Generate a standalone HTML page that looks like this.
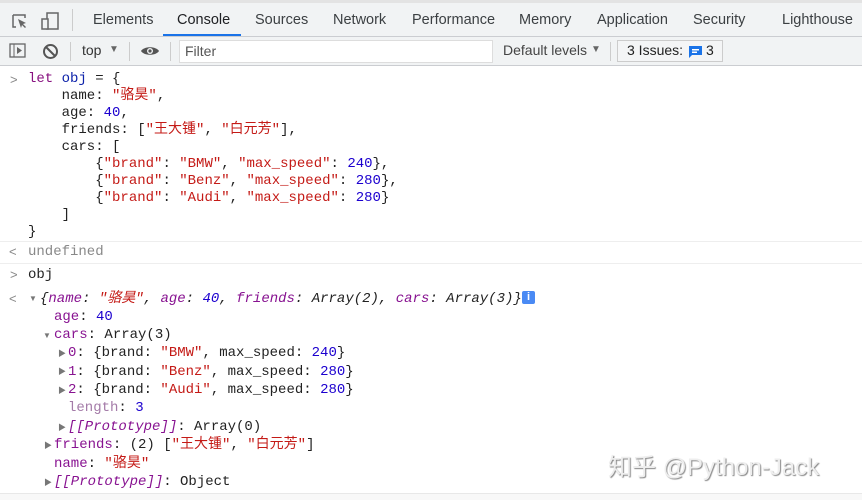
<!DOCTYPE html>
<html><head><meta charset="utf-8"><style>
*{margin:0;padding:0;box-sizing:border-box}
body{width:862px;height:500px;overflow:hidden;background:#fff;font-family:"Liberation Sans","Noto Sans CJK SC",sans-serif;position:relative}
.tb{position:absolute;left:0;top:0;width:862px;height:37px;background:#f1f3f4;border-bottom:1px solid #cbcdd1;border-top:3px solid #e3e3e3}
.tab{position:absolute;top:9px;font-size:14.5px;color:#3c4043}
.tb2{position:absolute;left:0;top:37px;width:862px;height:29px;background:#f1f3f4;border-bottom:1px solid #cbcdd1}
.m{font-family:"Liberation Mono","Noto Sans CJK SC",monospace;font-size:14px;color:#222;position:absolute;line-height:18px;white-space:pre}
.s{color:#c41a16}.n{color:#1c00cf}.p{color:#881391}.k{color:#881280}.v{color:#0d22aa}.g{color:#888}.i{font-style:italic}
.pr{position:absolute;font-size:13px;color:#888;font-family:"Liberation Sans",sans-serif}
.tri{position:absolute;font-size:8px;color:#777;line-height:10px}
</style></head><body>
<div class="tb">
<svg style="position:absolute;left:11px;top:9px" width="18" height="18"><path d="M2 3v12h3M2 3h12v3" fill="none" stroke="#666" stroke-width="1.5"/><path d="M7 7l8 4-3 1 3 3-1 1-3-3-1 3z" fill="#666"/></svg>
<svg style="position:absolute;left:40px;top:8px" width="20" height="20"><rect x="7" y="2" width="11" height="16" fill="none" stroke="#666" stroke-width="1.5"/><rect x="2" y="8" width="6" height="10" fill="#f1f3f4" stroke="#666" stroke-width="1.5"/></svg>
<div style="position:absolute;left:72px;top:6px;width:1px;height:22px;background:#ccc"></div>
<span class="tab" style="left:93px">Elements</span>
<span class="tab" style="left:177px;color:#202124">Console</span>
<div style="position:absolute;left:163px;top:31px;width:78px;height:2px;background:#1a73e8"></div>
<span class="tab" style="left:255px">Sources</span>
<span class="tab" style="left:333px">Network</span>
<span class="tab" style="left:412px">Performance</span>
<span class="tab" style="left:519px">Memory</span>
<span class="tab" style="left:597px">Application</span>
<span class="tab" style="left:693px">Security</span>
<span class="tab" style="left:782px">Lighthouse</span>
</div>
<div class="tb2">
<svg style="position:absolute;left:9px;top:6px" width="18" height="16"><rect x="1" y="1" width="15" height="13" fill="none" stroke="#666" stroke-width="1.3"/><line x1="5" y1="1" x2="5" y2="14" stroke="#666"/><path d="M8 4l5 3.5-5 3.5z" fill="#666"/></svg>
<svg style="position:absolute;left:42px;top:6px" width="17" height="17"><circle cx="8.5" cy="8.5" r="6.5" fill="none" stroke="#555" stroke-width="2"/><line x1="4" y1="4" x2="13" y2="13" stroke="#555" stroke-width="2"/></svg>
<div style="position:absolute;left:70px;top:5px;width:1px;height:19px;background:#ccc"></div>
<span style="position:absolute;left:82px;top:5px;font-size:14px;color:#333">top</span>
<span style="position:absolute;left:109px;top:7px;font-size:10px;color:#666">▼</span>
<div style="position:absolute;left:129px;top:5px;width:1px;height:19px;background:#ccc"></div>
<svg style="position:absolute;left:140px;top:7px" width="20" height="14"><path d="M1 7C4 2 16 2 19 7C16 12 4 12 1 7z" fill="#555"/><circle cx="10" cy="7" r="3" fill="#f1f3f4"/><circle cx="10" cy="7" r="1.6" fill="#555"/></svg>
<div style="position:absolute;left:170px;top:5px;width:1px;height:19px;background:#ccc"></div>
<div style="position:absolute;left:179px;top:3px;width:314px;height:23px;background:#fff;border:1px solid #ddd"></div>
<span style="position:absolute;left:185px;top:6px;font-size:14px;color:#555">Filter</span>
<span style="position:absolute;left:503px;top:5px;font-size:14px;color:#444">Default levels</span>
<span style="position:absolute;left:591px;top:7px;font-size:10px;color:#666">▼</span>
<div style="position:absolute;left:610px;top:5px;width:1px;height:19px;background:#ccc"></div>
<div style="position:absolute;left:617px;top:3px;width:106px;height:22px;border:1px solid #ccc;background:#f4f5f6"></div>
<span style="position:absolute;left:627px;top:5px;font-size:14px;color:#222">3 Issues:</span>
<svg style="position:absolute;left:689px;top:9px" width="13" height="12"><path d="M0 0h13v9H3l-3 3z" fill="#1a73e8"/><rect x="3" y="3" width="7" height="1.5" fill="#fff"/><rect x="3" y="5.5" width="5" height="1.5" fill="#fff"/></svg>
<span style="position:absolute;left:706px;top:5px;font-size:14px;color:#222">3</span>
</div>

<span class="pr" style="left:10px;top:72px">&gt;</span>
<div class="m" style="left:28px;top:71px;line-height:17px"><span class="k">let</span> <span class="v">obj</span> = {
    name: <span class="s">"骆昊"</span>,
    age: <span class="n">40</span>,
    friends: [<span class="s">"王大锺"</span>, <span class="s">"白元芳"</span>],
    cars: [
        {<span class="s">"brand"</span>: <span class="s">"BMW"</span>, <span class="s">"max_speed"</span>: <span class="n">240</span>},
        {<span class="s">"brand"</span>: <span class="s">"Benz"</span>, <span class="s">"max_speed"</span>: <span class="n">280</span>},
        {<span class="s">"brand"</span>: <span class="s">"Audi"</span>, <span class="s">"max_speed"</span>: <span class="n">280</span>}
    ]
}</div>
<div style="position:absolute;left:0;top:241px;width:862px;height:1px;background:#eee"></div>
<span class="pr" style="left:9px;top:244px">&lt;</span>
<div class="m g" style="left:28px;top:243px">undefined</div>
<div style="position:absolute;left:0;top:263px;width:862px;height:1px;background:#eee"></div>
<span class="pr" style="left:10px;top:267px">&gt;</span>
<div class="m" style="left:28px;top:266px">obj</div>
<span class="pr" style="left:9px;top:291px">&lt;</span>
<span class="tri" style="left:29px;top:294px">▼</span>
<div class="m i" style="left:40px;top:290px">{<span class="p">name</span>: <span class="s">"骆昊"</span>, <span class="p">age</span>: <span class="n">40</span>, <span class="p">friends</span>: Array(2), <span class="p">cars</span>: Array(3)}</div>
<div style="position:absolute;left:522px;top:291px;width:13px;height:13px;background:#4a8af4;border-radius:2px;color:#fff;font-size:11px;font-weight:bold;text-align:center;line-height:13px">i</div>
<div class="m" style="left:54px;top:308px"><span class="p">age</span>: <span class="n">40</span></div>
<span class="tri" style="left:43px;top:331px">▼</span>
<div class="m" style="left:54px;top:326px"><span class="p">cars</span>: Array(3)</div>
<span class="tri" style="left:58px;top:349px">▶</span>
<div class="m" style="left:68px;top:344px"><span class="p">0</span>: {brand: <span class="s">"BMW"</span>, max_speed: <span class="n">240</span>}</div>
<span class="tri" style="left:58px;top:367px">▶</span>
<div class="m" style="left:68px;top:363px"><span class="p">1</span>: {brand: <span class="s">"Benz"</span>, max_speed: <span class="n">280</span>}</div>
<span class="tri" style="left:58px;top:386px">▶</span>
<div class="m" style="left:68px;top:381px"><span class="p">2</span>: {brand: <span class="s">"Audi"</span>, max_speed: <span class="n">280</span>}</div>
<div class="m" style="left:68px;top:399px"><span style="color:#a47ba8">length</span>: <span class="n">3</span></div>
<span class="tri" style="left:58px;top:423px">▶</span>
<div class="m" style="left:68px;top:418px"><span class="p i">[[Prototype]]</span>: Array(0)</div>
<span class="tri" style="left:44px;top:441px">▶</span>
<div class="m" style="left:54px;top:436px"><span class="p">friends</span>: (2) [<span class="s">"王大锺"</span>, <span class="s">"白元芳"</span>]</div>
<div class="m" style="left:54px;top:455px"><span class="p">name</span>: <span class="s">"骆昊"</span></div>
<span class="tri" style="left:44px;top:478px">▶</span>
<div class="m" style="left:54px;top:473px"><span class="p i">[[Prototype]]</span>: Object</div>
<div style="position:absolute;left:0;top:493px;width:862px;height:7px;background:#f8f8f8;border-top:1px solid #e8e8e8"></div>
<div style="position:absolute;left:608px;top:447px;font-size:24px;color:#eee;text-shadow:1px 1px 1px #888;font-family:'Liberation Sans','Noto Sans CJK SC',sans-serif">知乎 @Python-Jack</div>
</body></html>
